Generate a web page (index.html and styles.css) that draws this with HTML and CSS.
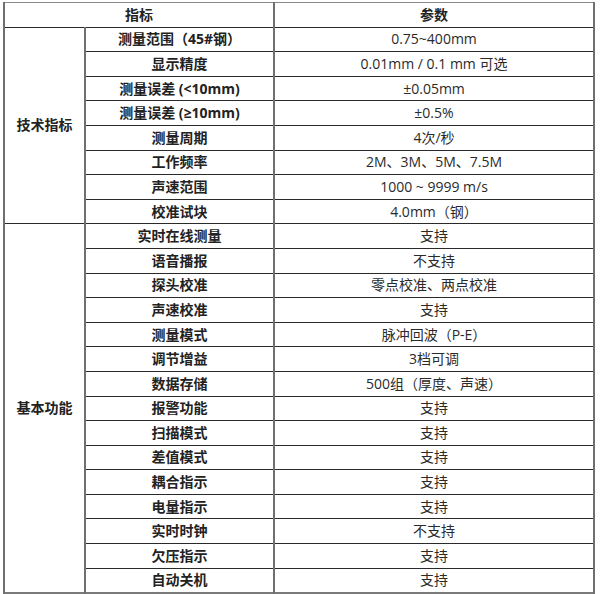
FILE: index.html
```html
<!DOCTYPE html>
<html lang="zh-CN">
<head>
<meta charset="utf-8">
<title>参数表</title>
<link rel="stylesheet" href="styles.css">
</head>
<body>
<div class="wrap">
<table class="spec">
  <colgroup>
    <col class="c1"><col class="c2"><col class="c3">
  </colgroup>
  <thead>
    <tr><th colspan="2">指标</th><th>参数</th></tr>
  </thead>
  <tbody>
    <tr><td class="grp" rowspan="8">技术指标</td><td class="key">测量范围（45#钢）</td><td class="val">0.75~400mm</td></tr>
    <tr><td class="key">显示精度</td><td class="val">0.01mm / 0.1 mm 可选</td></tr>
    <tr><td class="key">测量误差 (&lt;10mm)</td><td class="val">±0.05mm</td></tr>
    <tr><td class="key">测量误差 (≥10mm)</td><td class="val">±0.5%</td></tr>
    <tr><td class="key">测量周期</td><td class="val">4次/秒</td></tr>
    <tr><td class="key">工作频率</td><td class="val">2M、3M、5M、7.5M</td></tr>
    <tr><td class="key">声速范围</td><td class="val">1000 ~ 9999 m/s</td></tr>
    <tr><td class="key">校准试块</td><td class="val">4.0mm（钢）</td></tr>
    <tr><td class="grp" rowspan="15">基本功能</td><td class="key">实时在线测量</td><td class="val">支持</td></tr>
    <tr><td class="key">语音播报</td><td class="val">不支持</td></tr>
    <tr><td class="key">探头校准</td><td class="val">零点校准、两点校准</td></tr>
    <tr><td class="key">声速校准</td><td class="val">支持</td></tr>
    <tr><td class="key">测量模式</td><td class="val">脉冲回波（P-E）</td></tr>
    <tr><td class="key">调节增益</td><td class="val">3档可调</td></tr>
    <tr><td class="key">数据存储</td><td class="val">500组（厚度、声速）</td></tr>
    <tr><td class="key">报警功能</td><td class="val">支持</td></tr>
    <tr><td class="key">扫描模式</td><td class="val">支持</td></tr>
    <tr><td class="key">差值模式</td><td class="val">支持</td></tr>
    <tr><td class="key">耦合指示</td><td class="val">支持</td></tr>
    <tr><td class="key">电量指示</td><td class="val">支持</td></tr>
    <tr><td class="key">实时时钟</td><td class="val">不支持</td></tr>
    <tr><td class="key">欠压指示</td><td class="val">支持</td></tr>
    <tr><td class="key">自动关机</td><td class="val">支持</td></tr>
  </tbody>
</table>
</div>
</body>
</html>
```

FILE: styles.css
```css
html, body {
  margin: 0;
  padding: 0;
  background: #ffffff;
}

.wrap {
  padding: 2px 0 0 3px;
}

.spec {
  border-collapse: collapse;
  table-layout: fixed;
  width: 590px;
  font-family: "Open Sans", "Noto Sans CJK SC", sans-serif;
  font-size: 14px;
  color: #222;
  border-top: 1px solid #8a8a8a;
  border-left: 2px solid #505050;
  border-right: 2px solid #7a7a7a;
  border-bottom: 2px solid #7a7a7a;
}

.c1 { width: 81px; }
.c2 { width: 189px; }
.c3 { width: 320px; }

.spec th,
.spec td {
  height: 23.6px;
  padding: 0;
  text-align: center;
  vertical-align: middle;
  line-height: 18px;
  border-top: 1px solid #2a2a2a;
  border-bottom: 1px solid #2a2a2a;
  border-left: 2px solid #707070;
  border-right: 2px solid #707070;
  white-space: nowrap;
}

.spec thead th {
  font-weight: 700;
  border-top: 1px solid #8a8a8a;
}

.grp,
.key {
  font-weight: 700;
}

.val {
  font-weight: 400;
  color: #2a2a2a;
}
```
